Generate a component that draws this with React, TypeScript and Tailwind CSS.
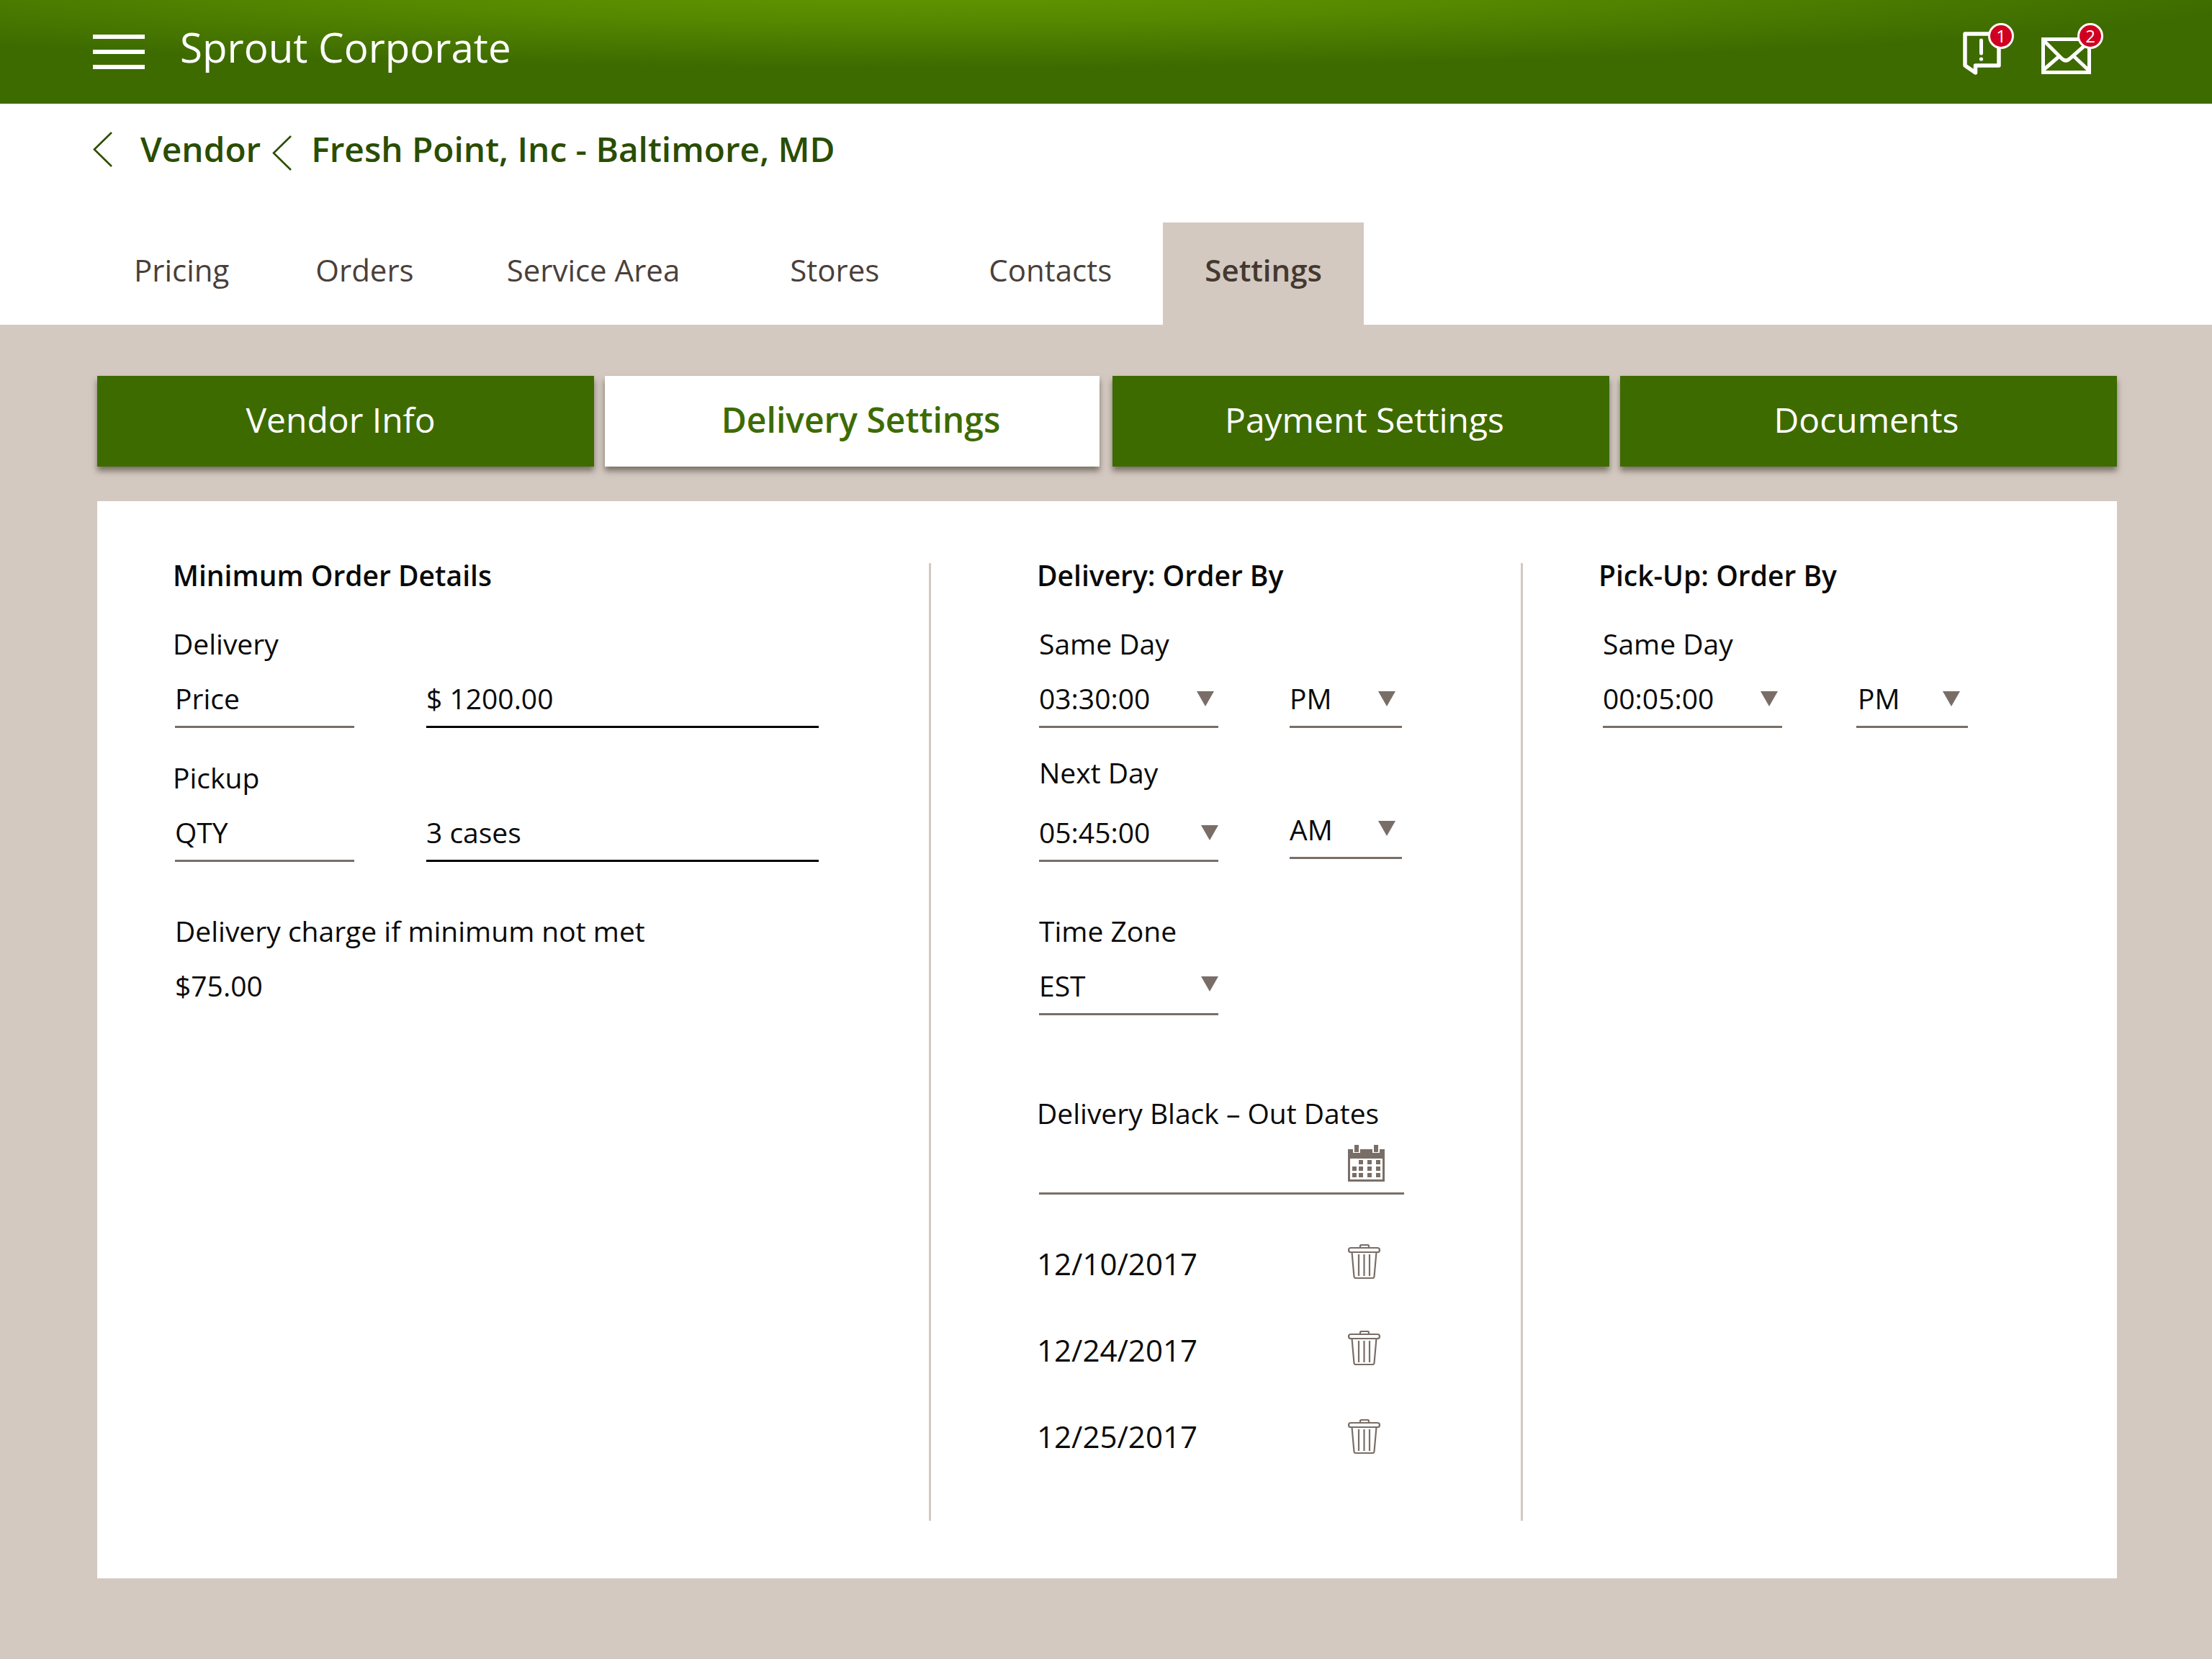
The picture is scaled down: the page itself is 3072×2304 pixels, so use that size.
import React from 'react';

const TABS = [
    { label: 'Pricing', cls: 'ml-[186px]' },
    { label: 'Orders', cls: 'ml-[120px]' },
    { label: 'Service Area', cls: 'ml-[129px]' },
    { label: 'Stores', cls: 'ml-[153px]' },
    { label: 'Contacts', cls: 'ml-[152px]' },
];

const SUBTABS = [
    { label: 'Vendor Info', cls: 'w-[690px] bg-[#3d6b00] text-white pr-[14px]' },
    { label: 'Delivery Settings', cls: 'w-[687px] ml-[15px] bg-white text-[#3d6b00] font-semibold pl-[24px]' },
    { label: 'Payment Settings', cls: 'w-[690px] ml-[18px] bg-[#3d6b00] text-white pl-[10px]' },
    { label: 'Documents', cls: 'w-[690px] ml-[15px] bg-[#3d6b00] text-white pr-[6px]' },
];

function Chevron({ className }: { className?: string }) {
    return (
        <svg viewBox="0 0 27 49" className={`w-[27px] h-[49px] shrink-0 ${className ?? ''}`} fill="none" stroke="#2a4d00" strokeWidth="2.6">
            <path d="M26 1 L2 24.5 L26 48" />
        </svg>
    );
}

function Badge({ n, className }: { n: number; className: string }) {
    return (
        <span className={`absolute w-[36px] h-[36px] rounded-full bg-[#cf0020] border-[3px] border-white text-white text-[24px] leading-[30px] text-center ${className}`}>
            {n}
        </span>
    );
}

function Triangle({ className }: { className?: string }) {
    return (
        <svg viewBox="0 0 24 21" className={`w-[24px] h-[21px] shrink-0 ${className ?? ''}`}>
            <polygon points="0,0 24,0 12,21" fill="#796e67" />
        </svg>
    );
}

function Calendar() {
    const cells = [
        [15, 21], [27, 21], [39, 21],
        [6, 30], [15, 30], [27, 30], [39, 30],
        [6, 39], [15, 39], [27, 39], [39, 39],
    ];
    return (
        <svg viewBox="0 0 51 51" className="w-[51px] h-[51px]">
            <rect x="0" y="6" width="51" height="45" fill="#796e67" />
            <rect x="3" y="19" width="45" height="29" fill="#fff" />
            <rect x="7" y="0" width="10" height="11" fill="#fff" />
            <rect x="34" y="0" width="10" height="11" fill="#fff" />
            <rect x="9" y="0" width="6" height="10" fill="#796e67" />
            <rect x="36" y="0" width="6" height="10" fill="#796e67" />
            {cells.map(([x, y]) => (
                <rect key={`${x}-${y}`} x={x} y={y} width="6" height="6" fill="#796e67" />
            ))}
        </svg>
    );
}

function Trash({ className }: { className?: string }) {
    return (
        <svg viewBox="0 0 45 48" className={`w-[45px] h-[48px] ${className ?? ''}`} fill="none" stroke="#796e67" strokeWidth="2.2">
            <path d="M17 5 V2.5 Q17 1 19 1 H27 Q29 1 29 2.5 V5" />
            <rect x="1" y="5" width="43" height="6" rx="3" />
            <path d="M5.5 11 L8.5 45 Q8.7 47 11 47 H34 Q36.3 47 36.5 45 L39.5 11" />
            <path d="M15 14 V44 M22.5 14 V44 M30 14 V44" />
        </svg>
    );
}

function Select({ value, width, triangle, className }: { value: string; width: string; triangle: string; className?: string }) {
    return (
        <div className={`flex justify-between items-start border-b-[3px] border-[#796e67] pb-[13px] ${width} ${className ?? ''}`}>
            <span>{value}</span>
            <Triangle className={triangle} />
        </div>
    );
}

export default function App() {
    return (
        <div className="min-h-[2304px] bg-[#d3c9c1] font-['Open_Sans',sans-serif] flex flex-col">
            {/* Top bar */}
            <header className="h-[144px] flex items-center pb-[6px] pl-[129px] pr-[168px] text-white bg-[radial-gradient(ellipse_62%_80%_at_42%_-15%,#649a00_0%,#568800_45%,#3d6b00_100%)]">
                <div className="w-[72px] h-[48px] mt-[6px] flex flex-col justify-between">
                    <span className="h-[6px] bg-white" />
                    <span className="h-[6px] bg-white" />
                    <span className="h-[6px] bg-white" />
                </div>
                <span className="ml-[49px] text-[56.5px] leading-[70px] -mt-[6px]">Sprout Corporate</span>
                <div className="ml-auto flex items-start mt-[9px]">
                    <div className="relative w-[53px] h-[60px]">
                        <svg viewBox="0 0 53 60" className="w-[53px] h-[60px]" fill="none" stroke="#fff" strokeWidth="5.5" strokeLinejoin="round" strokeLinecap="round">
                            <path d="M3 3 H50 V47 H17.5 V57 L3 47 Z" />
                            <path d="M25.5 12 V30" strokeWidth="5" />
                            <circle cx="25.5" cy="38" r="2.6" fill="#fff" stroke="none" />
                        </svg>
                        <Badge n={1} className="-top-[12px] left-[35px]" />
                    </div>
                    <div className="relative w-[69px] h-[51px] ml-[56px] mt-[8px]">
                        <svg viewBox="0 0 69 51" className="w-[69px] h-[51px]" fill="none" stroke="#fff" strokeWidth="5">
                            <rect x="2.5" y="2.5" width="64" height="46" />
                            <path d="M3 4 L28 29 Q34 35 40 29 L64 8" />
                            <path d="M3 45 L25 26 M45 26 L66 46" />
                        </svg>
                        <Badge n={2} className="-top-[20px] left-[50px]" />
                    </div>
                </div>
            </header>

            {/* Breadcrumb and main tabs */}
            <div className="h-[307px] bg-white flex flex-col">
                <div className="flex items-start h-[165px] pl-[129px] text-[47.8px] leading-[68px] font-semibold text-[#2a4d00]">
                    <Chevron className="mt-[39px]" />
                    <span className="ml-[39px] mt-[29px]">Vendor</span>
                    <Chevron className="ml-[16px] mt-[44px]" />
                    <span className="ml-[27px] mt-[29px]">Fresh Point, Inc - Baltimore, MD</span>
                </div>
                <div className="flex flex-1 items-stretch text-[42px] text-[#4a3f3a]">
                    {TABS.map((t) => (
                        <span key={t.label} className={`${t.cls} flex items-center pb-[12px]`}>{t.label}</span>
                    ))}
                    <span className="ml-[71px] w-[279px] bg-[#d3c9c1] flex items-center justify-center pb-[12px] font-semibold text-[#453830]">Settings</span>
                </div>
            </div>

            {/* Settings body */}
            <main className="pl-[135px] pr-[132px] pt-[71px]">
                <div className="flex">
                    {SUBTABS.map((t) => (
                        <div key={t.label} className={`h-[126px] flex items-center justify-center pb-[4px] text-[48px] shadow-[0_6px_8px_rgba(50,40,30,0.55)] ${t.cls}`}>
                            {t.label}
                        </div>
                    ))}
                </div>

                <div className="mt-[48px] h-[1496px] bg-white flex pt-[86px] pb-[80px] text-[39px] leading-[50px] text-[#0a0a0a]">
                    {/* Minimum order */}
                    <section className="w-[1158px] pl-[105px] border-r-[3px] border-[#d3c9c1]">
                        <h3 className="font-semibold leading-[34px]">Minimum Order Details</h3>
                        <p className="mt-[53px]">Delivery</p>
                        <div className="mt-[26px] flex pl-[3px]">
                            <div className="w-[249px] pb-[13px] border-b-[3px] border-[#796e67]">Price</div>
                            <div className="ml-[100px] w-[545px] pb-[13px] border-b-[3px] border-black">$ 1200.00</div>
                        </div>
                        <p className="mt-[44px]">Pickup</p>
                        <div className="mt-[26px] flex pl-[3px]">
                            <div className="w-[249px] pb-[13px] border-b-[3px] border-[#796e67]">QTY</div>
                            <div className="ml-[100px] w-[545px] pb-[13px] border-b-[3px] border-black">3 cases</div>
                        </div>
                        <p className="mt-[71px] pl-[3px]">Delivery charge if minimum not met</p>
                        <p className="mt-[26px] pl-[3px]">$75.00</p>
                    </section>

                    {/* Delivery */}
                    <section className="w-[822px] pl-[147px] border-r-[3px] border-[#d3c9c1]">
                        <h3 className="font-semibold leading-[34px]">Delivery: Order By</h3>
                        <div className="pl-[3px]">
                            <p className="mt-[53px]">Same Day</p>
                            <div className="mt-[26px] flex items-start">
                                <Select value="03:30:00" width="w-[249px]" triangle="mt-[15px] mr-[6px]" />
                                <Select value="PM" width="w-[156px]" triangle="mt-[15px] mr-[9px]" className="ml-[99px]" />
                            </div>
                            <p className="mt-[37px]">Next Day</p>
                            <div className="mt-[33px] flex items-start">
                                <Select value="05:45:00" width="w-[249px]" triangle="mt-[15px]" />
                                <Select value="AM" width="w-[156px]" triangle="mt-[13px] mr-[9px]" className="ml-[99px] -mt-[4px]" />
                            </div>
                            <p className="mt-[71px]">Time Zone</p>
                            <Select value="EST" width="w-[249px]" triangle="mt-[12px]" className="mt-[26px]" />
                        </div>
                        <h3 className="mt-[111px]">Delivery Black – Out Dates</h3>
                        <div className="mt-[19px] ml-[3px] w-[507px] h-[69px] flex justify-end border-b-[3px] border-[#796e67] pr-[27px]">
                            <Calendar />
                        </div>
                        <div className="mt-[71px] flex justify-between items-center w-[477px] text-[42px]">
                            <span>12/10/2017</span>
                            <Trash className="-mt-[6px]" />
                        </div>
                        <div className="mt-[70px] flex justify-between items-center w-[477px] text-[42px]">
                            <span>12/24/2017</span>
                            <Trash className="-mt-[6px]" />
                        </div>
                        <div className="mt-[70px] flex justify-between items-center w-[477px] text-[42px]">
                            <span>12/25/2017</span>
                            <Trash className="-mt-[1px]" />
                        </div>
                    </section>

                    {/* Pick-up */}
                    <section className="pl-[105px]">
                        <h3 className="font-semibold leading-[34px]">Pick-Up: Order By</h3>
                        <div className="pl-[6px]">
                            <p className="mt-[53px]">Same Day</p>
                            <div className="mt-[26px] flex items-start">
                                <Select value="00:05:00" width="w-[249px]" triangle="mt-[15px] mr-[6px]" />
                                <Select value="PM" width="w-[155px] pl-[2px]" triangle="mt-[15px] mr-[11px]" className="ml-[103px]" />
                            </div>
                        </div>
                    </section>
                </div>
            </main>
        </div>
    );
}
